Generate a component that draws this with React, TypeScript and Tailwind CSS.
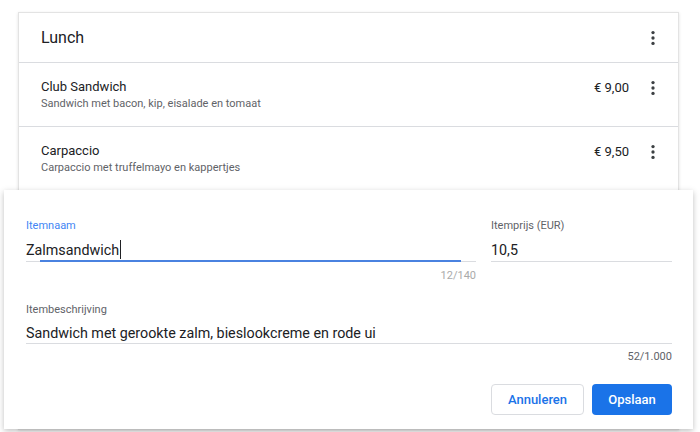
import React from 'react'

function MoreVert() {
  return (
    <svg viewBox="0 0 24 24" className="w-5 h-5 fill-[#3c4043]">
      <circle cx="12" cy="5.5" r="2" />
      <circle cx="12" cy="12" r="2" />
      <circle cx="12" cy="18.5" r="2" />
    </svg>
  )
}

const items = [
  { name: 'Club Sandwich', desc: 'Sandwich met bacon, kip, eisalade en tomaat', price: '€ 9,00' },
  { name: 'Carpaccio', desc: 'Carpaccio met truffelmayo en kappertjes', price: '€ 9,50' },
]

export default function App() {
  return (
    <div className="w-[700px] h-[432px] overflow-hidden bg-white font-['Roboto',sans-serif] text-[#202124]">
      <div className="ml-[18px] mt-[12px] w-[661px] bg-white border border-[#e3e3e3] shadow-[0_1px_3px_rgba(0,0,0,0.12)]">
        {/* Header */}
        <div className="h-[50px] flex items-center justify-between pl-[22px] pr-[15px] border-b border-[#dadce0]">
          <span className="text-[16px]">Lunch</span>
          <MoreVert />
        </div>

        {/* Items */}
        {items.map((it) => (
          <div key={it.name} className="h-[64px] flex items-start justify-between pl-[22px] pr-[15px] pt-[15px] border-b border-[#dadce0]">
            <div>
              <div className="text-[13px] leading-[18px]">{it.name}</div>
              <div className="text-[11px] leading-[16px] text-[#5f6368]">{it.desc}</div>
            </div>
            <div className="flex items-center gap-[14px]">
              <span className="text-[13px] leading-[18px]">{it.price}</span>
              <MoreVert />
            </div>
          </div>
        ))}

        {/* Edit panel */}
        <div className="-mx-[15px] -mt-[1px] bg-white shadow-[0_2px_6px_rgba(0,0,0,0.25)] pl-[22px] pr-[21px] pt-[29px] pb-[14px] relative">
          <div className="flex gap-[15px]">
            <div className="w-[450px]">
              <div className="text-[11px] leading-[14px] text-[#4285f4]">Itemnaam</div>
              <div className="relative h-[29px] pb-[1px] border-b border-[#dadce0] text-[14.3px] leading-[20px] flex items-end">
                <span>Zalmsandwich</span>
                <span className="ml-[1px] mb-[1px] w-px h-[19px] bg-[#202124]" />
                <div className="absolute left-[14px] right-[15px] -bottom-px h-[2px] bg-[#4a82e0]" />
              </div>
              <div className="mt-[7px] text-right text-[11px] leading-[14px] text-[#aaaaaa]">12/140</div>
            </div>
            <div className="flex-1">
              <div className="text-[11px] leading-[14px] text-[#5f6368]">Itemprijs (EUR)</div>
              <div className="h-[29px] pb-[1px] border-b border-[#dadce0] text-[14.3px] leading-[20px] flex items-end">10,5</div>
            </div>
          </div>

          <div className="mt-[20px]">
            <div className="text-[11px] leading-[14px] text-[#5f6368]">Itembeschrijving</div>
            <div className="h-[27px] border-b border-[#dadce0] text-[14.3px] leading-[20px] flex items-end">
              Sandwich met gerookte zalm, bieslookcreme en rode ui
            </div>
            <div className="mt-[6px] text-right text-[11px] leading-[14px] text-[#5f6368]">52/1.000</div>
          </div>

          <div className="mt-[20px] flex justify-end gap-[8px]">
            <button className="w-[93px] h-[31px] rounded-[4px] border border-[#dadce0] bg-white text-[13px] font-medium text-[#1a73e8]">
              Annuleren
            </button>
            <button className="w-[80px] h-[31px] rounded-[4px] bg-[#1a73e8] text-[13px] font-medium text-white">
              Opslaan
            </button>
          </div>
        </div>
      </div>
    </div>
  )
}
